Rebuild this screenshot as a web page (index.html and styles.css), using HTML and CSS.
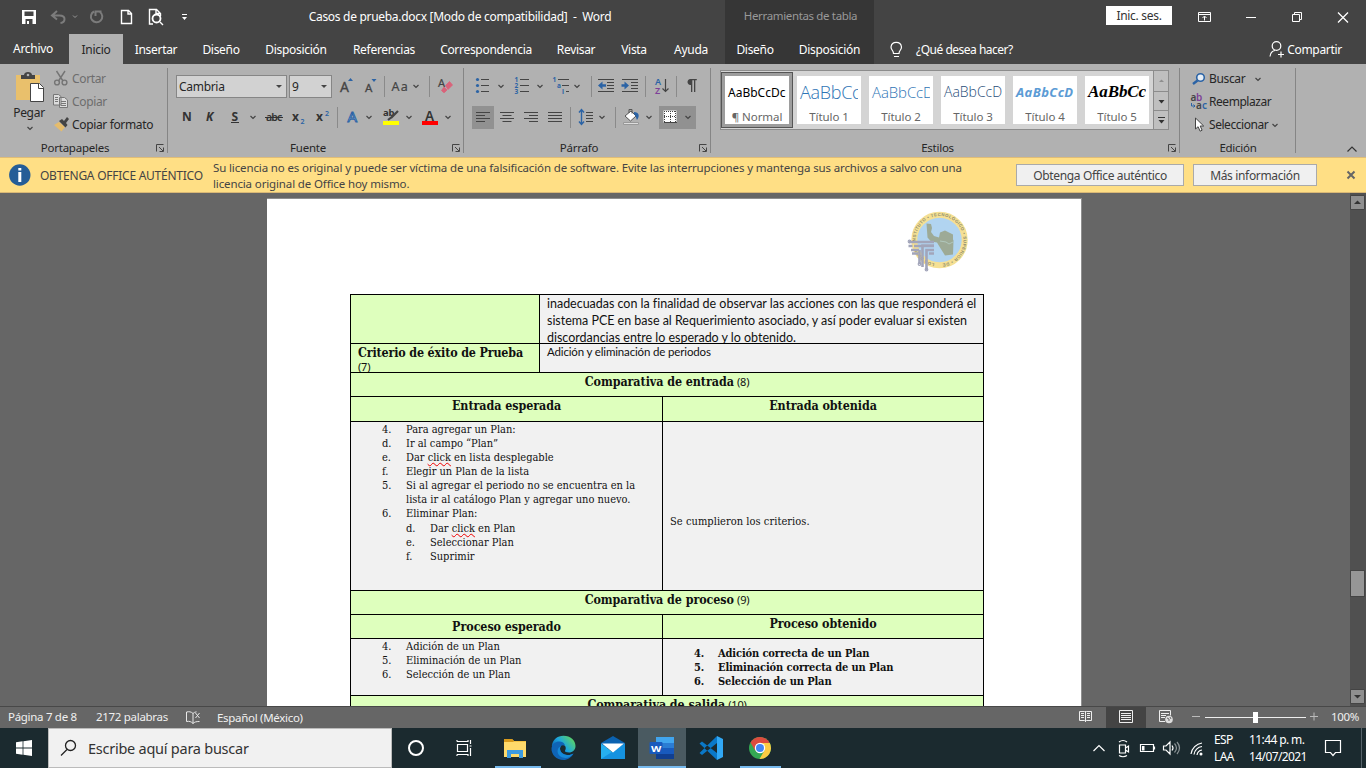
FILE: index.html
```html
<!DOCTYPE html>
<html lang="es">
<head>
<meta charset="utf-8">
<title>Casos de prueba.docx - Word</title>
<link rel="stylesheet" href="styles.css">
</head>
<body>
<svg class="defs" width="0" height="0"><defs>
<path id="cv" d="M-2.5-1 0 1.5 2.5-1" fill="none" stroke="#444" stroke-width="1.2"/>
<path id="launch" d="M.5 7.5V.5h7M3 3l4 4M7.5 3.5v4h-4" fill="none" stroke="#444"/>
</defs></svg>
<header class="titlebar">
  <div class="qat">
    <svg viewBox="0 4 199 25" width="199" height="25" fill="none" stroke="#fff">
      <path d="M22 10h14v14H22z" fill="#fff" stroke="none"/><path d="M24.500 11.500h9v4.500h-9zM25.500 19h7v5h-7z" fill="#444" stroke="none"/><path d="M27 21h2v3h-2z" fill="#fff" stroke="none"/>
      <g stroke="#7c7c7c" stroke-width="2"><path d="M57 11l-5 4.500 5 4M52.500 15.500h7c7 0 6 7 1 7.500"/><path d="M94 11.500a5.700 5.700 0 1 0 6 .5M95.500 16v-4.500h6"/></g>
      <path d="M73 15.500l2 2 2-2" stroke="#999"/>
      <path d="M121.500 10.500h7l3 3v10h-10zM128 10.500v3.500h3" stroke-width="1.400"/>
      <path d="M153 24h-3.500V9.500h7l4 4V16M156 9.500v4h4M160 22l3 3" stroke-width="1.400"/><circle cx="156.500" cy="18.500" r="4" stroke-width="1.800"/>
      <path d="M182 14.500h5"/><path d="M182 17h5l-2.500 3z" fill="#fff" stroke="none"/>
    </svg>
  </div>
  <div class="doc-title">Casos de prueba.docx [Modo de compatibilidad]&nbsp; -&nbsp; Word</div>
  <div class="ctx-title">Herramientas de tabla</div>
  <div class="window-tools">
    <button class="signin">Inic. ses.</button>
    <svg viewBox="1182 2 184 26" width="184" height="26" fill="none" stroke="#fff">
      <path d="M1198.500 10.500h12v9h-12zM1198.500 12.500h12M1204.500 18.500v-4M1202.500 16l2-2 2 2M1246 15.500h10M1292.500 12.500h7v7h-7zM1294.500 12v-1.500h7v7h-2"/><path d="M1338 10.500l10 10M1348 10.500l-10 10" stroke-width="1.300"/>
    </svg>
  </div>
</header>
<nav class="tabs">
  <span class="file">Archivo</span><span class="active">Inicio</span><span>Insertar</span><span>Diseño</span><span>Disposición</span><span>Referencias</span><span>Correspondencia</span><span>Revisar</span><span>Vista</span><span>Ayuda</span><i></i><span class="ctx">Diseño</span><span class="ctx">Disposición</span>
  <div class="tell">
    <svg viewBox="888 39 16 20" width="16" height="20" fill="none" stroke="#fff"><path d="M893.500 52.500c0-3-2.500-3.500-2.500-6.500a5.300 5.300 0 0 1 10.500 0c0 3-2.500 3.500-2.500 6.500zM894 55.500h5" stroke-width="1.200"/></svg>
    <span>¿Qué desea hacer?</span>
  </div>
  <div class="share">
    <svg viewBox="1267 39 17 20" width="17" height="20" fill="none" stroke="#fff" stroke-width="1.200"><circle cx="1276.500" cy="45" r="4.300"/><path d="M1270 55.500c.5-4 2-5.500 5-6M1278 53.500h6M1281 50.500v6"/></svg>
    <span>Compartir</span>
  </div>
</nav>
<section class="ribbon">
  <div class="group g-clip">
    <div class="body clip-body">
      <div class="paste">
        <svg viewBox="16 70 30 34" width="30" height="34"><path d="M17 75h24v25H17z" fill="#e9c06c"/><path d="M22 78v-3h3c0-4 8-4 8 0h3v4H22z" fill="#444"/><circle cx="29" cy="75" r="1.300" fill="#b1b1b1"/><path d="M31.500 83.500h9l4 4v14h-13z" fill="#fff" stroke="#444"/><path d="M39.500 84v4.500h5" fill="none" stroke="#444"/></svg>
        <span>Pegar</span>
        <svg width="10" height="8"><use href="#cv" x="5" y="4"/></svg>
      </div>
      <div class="cmds">
        <div class="cmd off"><svg viewBox="53 70 17 17" width="17" height="17" fill="none" stroke="#747474" stroke-width="1.400"><path d="M56.500 71l6.500 10M65 71l-6.500 10"/><circle cx="57" cy="82.500" r="2.400"/><circle cx="64.500" cy="82.500" r="2.400"/></svg><span>Cortar</span></div>
        <div class="cmd off"><svg viewBox="53 93 17 17" width="17" height="17" fill="#ddd" stroke="#777"><path d="M53.500 94.500h5l2.500 2v8.500h-7.500zM59.500 97.500h5l3 2.500v7.500h-8z"/><path d="M55 97.500h3M55 99.500h3M55 101.500h3M61 101.500h5M61 103.500h5M61 105.500h5"/></svg><span>Copiar</span></div>
        <div class="cmd"><svg viewBox="53 116 17 17" width="17" height="17"><path d="M54 125l5-3 6 5-3.500 4.500z" fill="#e5bc6c"/><path d="M59 121l3-2 2 2 3-4 2 2-3 4 1.500 2-2 2.500z" fill="#444"/></svg><span>Copiar formato</span></div>
      </div>
    </div>
    <div class="foot"><span>Portapapeles</span><svg width="8" height="8"><use href="#launch"/></svg></div>
  </div>
  <div class="group g-font">
    <div class="body">
      <div class="line one">
        <div class="combo name"><span>Cambria</span><b></b></div><div class="combo size"><span>9</span><b></b></div>
        <svg viewBox="334 74 122 24" width="122" height="24" font-family="Noto Sans" fill="#444"><text x="340" y="92" font-size="14" stroke="#444" stroke-width=".3">A</text><path d="M348 81h5l-2.500-3zM371.500 79h5l-2.500 3z" fill="#2b63a5"/><text x="365" y="92" font-size="11.500" stroke="#444" stroke-width=".3">A</text><path d="M384.500 76v21M429.500 76v21" stroke="#8a8a8a"/><text x="391.500" y="91" font-size="12.500" textLength="16" stroke="#444" stroke-width=".2">Aa</text><use href="#cv" x="416" y="86"/><text x="438" y="87" font-size="11" stroke="#444" stroke-width=".2">A</text><path d="M445.500 85.500l4-4 3 3.500-4.500 4.500zM444 87l3 3-2.500 2.500h-1l-2-2z" fill="#d9637a" stroke="#d9637a" stroke-width=".8"/></svg>
      </div>
      <div class="line two">
        <svg viewBox="176 105 280 24" width="280" height="24" font-family="Noto Sans" fill="#333">
          <g font-size="12" font-weight="700"><text x="182" y="121">N</text><text x="206" y="121" font-style="italic">K</text><text x="231.500" y="121">S</text><text x="292" y="121">x</text><text x="316" y="121">x</text></g><path d="M231 122.500h8" stroke="#333"/>
          <text x="266" y="121" font-size="10.500" font-weight="600" textLength="16">abc</text><path d="M265 117.500h18" stroke="#333"/>
          <text x="300.500" y="124" font-size="7" font-weight="600" fill="#2b63a5">2</text><text x="325" y="116" font-size="7" font-weight="600" fill="#2b63a5">2</text>
          <use href="#cv" x="253" y="117"/><use href="#cv" x="369" y="117"/><use href="#cv" x="409" y="117"/><use href="#cv" x="448" y="117"/>
          <path d="M337.500 107v21" stroke="#8a8a8a"/>
          <text x="347.500" y="122" font-size="15" fill="#b9d1ea" stroke="#2b63a5" stroke-width="1">A</text>
          <text x="383" y="116" font-size="9.500" font-weight="700">ab</text><path d="M398 111l-7 7M393 116l-5 4" stroke="#444" stroke-width="2.200"/><path d="M383 121h16v4h-16z" fill="#ff0"/>
          <text x="425" y="121" font-size="13.500" font-weight="600">A</text><path d="M422 121h16v4h-16z" fill="#f00"/>
        </svg>
      </div>
    </div>
    <div class="foot"><span>Fuente</span><svg width="8" height="8"><use href="#launch"/></svg></div>
  </div>
  <div class="group g-para">
    <div class="body">
      <div class="line one">
        <svg viewBox="472 74 230 24" width="230" height="24" fill="none" stroke="#444" stroke-width="1.200" font-family="Noto Sans">
          <path d="M481 79.500h8M481 85.500h8M481 91.500h8M520 79.500h9M520 85.500h9M520 91.500h9M558 79.500h11M562 85.500h7M566 91.500h3"/>
          <g fill="#2b63a5" stroke="none"><circle cx="477.500" cy="79.500" r="1.600"/><circle cx="477.500" cy="85.500" r="1.600"/><circle cx="477.500" cy="91.500" r="1.600"/><g font-size="6.500" font-weight="700"><text x="514.500" y="82">1</text><text x="514.500" y="88">2</text><text x="514.500" y="94">3</text><text x="552.500" y="82">1</text><text x="557" y="88">a</text><text x="562" y="94">i</text></g><path d="M598 85.500l4.500-4v2.800h3.500v2.400h-3.500v2.800zM629 85.500l-4.500-4v2.800h-3v2.400h3v2.800z"/></g>
          <use href="#cv" x="501" y="86"/><use href="#cv" x="540" y="86"/><use href="#cv" x="577" y="86"/>
          <path d="M591.500 76v21M645.500 76v21M676.500 76v21" stroke="#8a8a8a" stroke-width="1"/>
          <path d="M598 79.500h16M607 82.500h7M607 85.500h7M607 88.500h7M598 91.500h16M622 79.500h16M631 82.500h7M631 85.500h7M631 88.500h7M622 91.500h16M665.500 79v12M662.500 88.500l3 3 3-3"/>
          <g stroke="none"><text x="655" y="85" font-size="9" font-weight="600" fill="#2b63a5">A</text><text x="655" y="94" font-size="9" font-weight="600" fill="#7d3f98">Z</text><path d="M696 79h-5.500c-4 0-4 6 0 6H691v7h1.300V80.300H694V92h1.300V80.300h1.500V79z" fill="#444"/></g>
        </svg>
      </div>
      <div class="line two">
        <svg viewBox="472 105 230 24" width="230" height="24" fill="none" stroke="#444">
          <path d="M472 106h22v23h-22zM659 106h37v23h-37z" fill="#919191" stroke="none"/>
          <path d="M476 112.500h14M476 115.500h9M476 118.500h14M476 121.500h9M500 112.500h14M502.500 115.500h9M500 118.500h14M502.500 121.500h9M524 112.500h14M529 115.500h9M524 118.500h14M529 121.500h9M548 112.500h14M548 115.500h14M548 118.500h14M548 121.500h14M586 112.500h7M586 115.500h7M586 118.500h7M586 121.500h7"/>
          <path d="M570.500 107v21M615.500 107v21" stroke="#8a8a8a"/>
          <path d="M581.500 110v14M579 112.500l2.500-3 2.500 3M579 121.500l2.500 3 2.500-3" stroke="#2b63a5" stroke-width="1.400"/>
          <path d="M625 116l6-5 5 5-5.500 5z" fill="#fff" stroke="#555"/><path d="M629 113v-3.500h3v4" stroke="#555"/><path d="M634 112c5 0 6 4 3 8-1-2-.5-3.500-3-6z" fill="#2b63a5" stroke="none"/><path d="M623.500 122.500h15v2h-15z" fill="#ddd" stroke="#999"/>
          <path d="M663.500 110.500h13v12h-13z" fill="#fff" stroke="none"/><path d="M664 111.500h12M664 116.500h12M670.500 111v11M664.500 111v11M675.500 111v11" stroke-dasharray="1 1"/><path d="M664 122.500h13"/>
          <use href="#cv" x="602" y="117"/><use href="#cv" x="649" y="117"/><use href="#cv" x="688" y="117"/>
        </svg>
      </div>
    </div>
    <div class="foot"><span>Párrafo</span><svg width="8" height="8"><use href="#launch"/></svg></div>
  </div>
  <div class="group g-styles">
    <div class="body gallery-wrap">
      <div class="gallery">
        <div class="style sel"><div class="s0">AaBbCcDc</div><span>¶ Normal</span></div>
        <div class="style"><div class="s1">AaBbCc</div><span>Título 1</span></div>
        <div class="style"><div class="s2">AaBbCcD</div><span>Título 2</span></div>
        <div class="style"><div class="s3">AaBbCcD</div><span>Título 3</span></div>
        <div class="style"><div class="s4">AaBbCcD</div><span>Título 4</span></div>
        <div class="style"><div class="s5">AaBbCc</div><span>Título 5</span></div>
        <div class="gscroll">
          <svg width="14" height="20"><path d="M5 11h5l-2.500-2.500z" fill="#8e8e8e"/></svg>
          <svg width="14" height="19"><path d="M4.500 8h6l-3 3.500z" fill="#333"/></svg>
          <svg width="14" height="18"><path d="M4 6.500h7" stroke="#333"/><path d="M4.500 9h6l-3 3.500z" fill="#333"/></svg>
        </div>
      </div>
    </div>
    <div class="foot"><span>Estilos</span><svg width="8" height="8"><use href="#launch"/></svg></div>
  </div>
  <div class="group g-edit">
    <div class="body cmds">
      <div class="cmd"><svg viewBox="1190 69 19 18" width="19" height="18" fill="none"><circle cx="1200.500" cy="76.500" r="3.800" fill="#e6eef6" stroke="#2b63a5" stroke-width="1.600"/><path d="M1197.500 79.500l-4.500 3.500" stroke="#2b63a5" stroke-width="2.400"/></svg><span>Buscar</span><svg class="far" width="8" height="8"><use href="#cv" x="4" y="4"/></svg></div>
      <div class="cmd"><svg viewBox="1190 92 19 18" width="19" height="18" font-family="Noto Sans" font-size="10" font-weight="600"><text x="1190.500" y="100" fill="#444">a</text><text x="1196" y="100" fill="#7d3f98">b</text><text x="1196" y="107.500" fill="#444">a</text><text x="1202" y="107.500" fill="#2b63a5">c</text><path d="M1191.500 102v3h3.500M1193.500 103.500l1.500 1.500-1.500 1.500" fill="none" stroke="#2b63a5"/></svg><span class="tight">Reemplazar</span></div>
      <div class="cmd"><svg viewBox="1190 115 19 18" width="19" height="18"><path d="M1195.500 117v11l2.600-2.300 2 4.500 2-1-1.900-4.200h3.500z" fill="#fff" stroke="#444"/></svg><span class="tight">Seleccionar</span><svg class="near" width="8" height="8"><use href="#cv" x="4" y="4"/></svg></div>
    </div>
    <div class="foot"><span>Edición</span></div>
  </div>
  <div class="collapse"><svg width="12" height="8" fill="none" stroke="#333" stroke-width="1.200"><path d="M1.500 6.500l4.500-4.500 4.500 4.500"/></svg></div>
</section>
<section class="notice">
  <svg viewBox="8 164 24 24" width="24" height="24"><circle cx="19.800" cy="176" r="10.700" fill="#255d97"/><path d="M18.300 173h3v10h-3zM18.300 169h3v2.500h-3z" fill="#fff"/></svg>
  <span class="n-head">OBTENGA OFFICE AUTÉNTICO</span>
  <p>Su licencia no es original y puede ser víctima de una falsificación de software. Evite las interrupciones y mantenga sus archivos a salvo con una<br>licencia original de Office hoy mismo.</p>
  <button class="b1">Obtenga Office auténtico</button><button class="b2">Más información</button>
  <svg class="n-x" width="10" height="10"><path d="M1.500 1.500l7 7M8.500 1.500l-7 7" stroke="#666" stroke-width="2"/></svg>
</section>
<main class="workspace">
  <div class="page">
    <div class="letterhead">
      <svg viewBox="905 209 66 64" width="66" height="64">
        <circle cx="939.500" cy="240" r="25.200" fill="#b1d4f0" stroke="#f5e094" stroke-width="6"/>
        <path d="M926.500 223.500l4.500.5 1 4-1 4 3 4 5 1.500 1-5 5-2 8 4v5l.5 1-.5 14-8 1-5-8-3-5-6-1-3.500-4z" fill="#9daa96"/><path d="M940 241l6 1 3 2 4-2" stroke="#b1c8bd" fill="none"/>
        <path id="ring" d="M939.500 264a24 24 0 1 1 .1 0" fill="none"/>
        <text font-family="Liberation Sans" font-size="4.300" font-weight="700" fill="#8e8d6e"><textPath href="#ring" startOffset="5" textLength="142">LOS RÍOS • INSTITUTO • TECNOLÓGICO • SUPERIOR • DE</textPath></text>
        <g fill="none" stroke="#a2a5ba" stroke-width="2.600"><path d="M909 242h25M908.500 246h4M914 246h20M911 250h8M934 250h-7.500v20M912 253.500h6M934 245.500h-11.500V267M934 253.500h-5M919.500 250v14"/><circle cx="909.500" cy="241.500" r=".6"/><circle cx="919.500" cy="264" r=".6"/><circle cx="926.500" cy="269.500" r=".6"/></g>
      </svg>
    </div>
    <div class="grid">
      <div class="row r1"><div class="cell green k"></div><div class="cell sans"><p>inadecuadas con la finalidad de observar las acciones con las que responderá el</p><p class="p2">sistema PCE en base al Requerimiento asociado, y así poder evaluar si existen</p><p class="p3">discordancias entre lo esperado y lo obtenido.</p></div></div>
      <div class="row r2"><div class="cell green k key"><b>Criterio de éxito de Prueba</b><small>(7)</small></div><div class="cell sans"><p class="short">Adición y eliminación de periodos</p></div></div>
      <div class="row r3"><div class="cell green full h"><b>Comparativa de entrada</b> <small>(8)</small></div></div>
      <div class="row r4"><div class="cell green l h"><b>Entrada esperada</b></div><div class="cell green r h"><b>Entrada obtenida</b></div></div>
      <div class="row r5">
        <div class="cell l list">
          <div><i>4.</i>Para agregar un Plan:</div><div><i>d.</i>Ir al campo “Plan”</div><div><i>e.</i>Dar <u>click</u> en lista desplegable</div><div><i>f.</i>Elegir un Plan de la lista</div><div><i>5.</i>Si al agregar el periodo no se encuentra en la</div><div><i></i>lista ir al catálogo Plan y agregar uno nuevo.</div><div><i>6.</i>Eliminar Plan:</div>
          <div class="sub first"><i>d.</i>Dar <u>click</u> en Plan</div><div class="sub"><i>e.</i>Seleccionar Plan</div><div class="sub"><i>f.</i>Suprimir</div>
        </div>
        <div class="cell r met">Se cumplieron los criterios.</div>
      </div>
      <div class="row r6"><div class="cell green full h"><b>Comparativa de proceso</b> <small>(9)</small></div></div>
      <div class="row r7"><div class="cell green l h low"><b>Proceso esperado</b></div><div class="cell green r h"><b>Proceso obtenido</b></div></div>
      <div class="row r8">
        <div class="cell l list"><div><i>4.</i>Adición de un Plan</div><div><i>5.</i>Eliminación de un Plan</div><div><i>6.</i>Selección de un Plan</div></div>
        <div class="cell r list strong"><div><i>4.</i>Adición correcta de un Plan</div><div><i>5.</i>Eliminación correcta de un Plan</div><div><i>6.</i>Selección de un Plan</div></div>
      </div>
      <div class="row r9"><div class="cell green full h"><b>Comparativa de salida</b> <small>(10)</small></div></div>
    </div>
  </div>
  <div class="scroll">
    <svg width="15" height="15"><path d="M.5.500h14v14H.5z" fill="#8f8f8f" stroke="#444"/><path d="M4 9h7L7.500 5.500z" fill="#333"/></svg>
    <div class="thumb"></div>
    <svg width="15" height="15"><path d="M.5.500h14v14H.5z" fill="#8f8f8f" stroke="#444"/><path d="M4 6h7l-3.500 3.500z" fill="#333"/></svg>
  </div>
</main>
<div class="status">
  <span class="st1">Página 7 de 8</span><span class="st2">2172 palabras</span>
  <svg viewBox="184 708 18 18" width="18" height="18" fill="none" stroke="#e8e8e8"><path d="M193 712.500c-2-2-4-2-6.500-1.500v9.500c3-.5 4.500 0 6.500 2v-10c1-1 2-1.500 3.500-1.700M193 722.500c1.500-1.500 3-2 6.500-2M195.500 712l4 5M199.500 712l-4 5"/></svg>
  <span class="st3">Español (México)</span>
  <svg class="views" viewBox="1070 707 252 21" width="252" height="21" fill="none" stroke="#eee">
    <path d="M1106 707h40v21h-40z" fill="#444" stroke="none"/>
    <path d="M1085.500 711v11M1079.500 711.500h5l1 1 1-1h5v9h-5l-1 1-1-1h-5zM1081 713.500h3M1081 715.500h3M1081 717.500h3M1087 713.500h3M1087 715.500h3M1087 717.500h3"/>
    <path d="M1119.500 710.500h13v12h-13zM1121 713.500h10M1121 715.500h10M1121 717.500h10M1121 719.500h10"/>
    <path d="M1165 721.500h-5.500v-11h11v5M1161 713.500h8M1161 715.500h5M1161 717.500h4"/><circle cx="1169" cy="719.500" r="3.800" fill="#ddd" stroke="none"/><path d="M1167 718l2 1v2M1170 717l1 2" stroke="#666"/>
    <path d="M1192 716.500h8M1310 716.500h8M1314 712.500v8" stroke="#bbb"/><path d="M1205 717.500h101"/><path d="M1253 712h5v11h-5z" fill="#fff" stroke="none"/>
  </svg>
  <span class="st4">100%</span>
</div>
<footer class="taskbar">
  <div class="start"><svg viewBox="16 740 16 16" width="16" height="16" fill="#fff"><path d="M16 742.200l6.600-.9v6.300H16zM23.400 741.200l8.600-1.200v7.600h-8.600zM16 748.400h6.600v6.300l-6.600-.9zM23.400 748.400H32v7.600l-8.600-1.200z"/></svg></div>
  <div class="search"><svg viewBox="60 739 17 18" width="17" height="18" fill="none" stroke="#222" stroke-width="1.300"><circle cx="70.500" cy="745.500" r="5"/><path d="M67 749.500l-6 6"/></svg><span>Escribe aquí para buscar</span></div>
  <svg viewBox="392 728 394 40" width="394" height="40">
    <defs><linearGradient id="eg" x1="0" y1=".8" x2="1" y2=".2"><stop offset="0" stop-color="#0a59a8"/><stop offset=".45" stop-color="#1ba4e0"/><stop offset="1" stop-color="#62d957"/></linearGradient></defs>
    <path d="M638 728h48v40h-48z" fill="#4a5a61"/><path d="M495 766h46v2h-46zM638 766h48v2h-48zM740 766h41v2h-41z" fill="#76b9ed"/>
    <circle cx="416" cy="748" r="7" fill="none" stroke="#fff" stroke-width="2"/>
    <path d="M457.500 744.500h10v7h-10zM457 741.500v-1.500M457 741.500h11V740M457 754.500h11v1.500M457 754.500v1.500M470.500 740v4M470.500 748v8M469.500 746h2" fill="none" stroke="#fff" stroke-width="1.200"/>
    <path d="M504 739h8l2 2h12v16h-22z" fill="#f5c344"/><path d="M504 739h8l2 2-2 2h-8z" fill="#d99b1d"/><path d="M504 742h22v15h-22z" fill="#ffda6b"/><path d="M507 758v-8h16v8h-4v-4h-8v4z" fill="#3d9be0"/>
    <path d="M551.800 746c.7-6.300 5.500-10.200 11.700-10.200 7 0 12 4.700 12 10.200 0 4-3 6.500-6.500 6.500-3 0-4.500-1-4-2 1.500-2 1-6-3.500-6-4 0-6 3-9.700 1.500z" fill="url(#eg)"/><path d="M551.500 748c1-5 5-7 8.500-6.500 3 .3 5 2.500 5 4.500-1-1-3-1-4 0-2.500 3 0 8.500 6 9 3 .2 5-.7 6.500-1.500-2 4-6 6.500-10 6.500-7 0-12.500-5.500-12-12z" fill="#0f64b6"/><path d="M561 746c-2.500 3 0 8.500 6 9 3 .2 5-.7 6.500-1.500-4 5-9 5.500-13 3-4-3-4-8.500.5-10.500z" fill="#1489d8"/>
    <path d="M601 743l12-7 12 7v5h-24z" fill="#0b62b0"/><path d="M601 743.500l12 9 12-9V759h-24z" fill="#26b0f0"/><path d="M601 759l24-15.500V759z" fill="#1592e0"/><path d="M602 743.500h22l-11 9z" fill="#fff"/>
    <path d="M656 737h18v22h-18z" fill="#2b7cd3"/><path d="M656 737h18v6h-18z" fill="#41a5ee"/><path d="M656 748h18v6h-18z" fill="#185abd"/><path d="M656 754h18v5h-18z" fill="#103f91"/><rect x="649.500" y="742" width="13" height="12" rx="1" fill="#185abd"/><text x="651" y="752" font-family="Noto Sans" font-weight="700" font-size="9.500" textLength="10" lengthAdjust="spacingAndGlyphs" fill="#fff">W</text>
    <path d="M699.500 743.500l2.500-2 15 11.500v7zM699.500 753l2.500 2 15-12v-7z" fill="#0a78c8"/><path d="M717 736l6 3v18l-6 3z" fill="#31a8f5"/>
    <circle cx="760" cy="748" r="11" fill="#34a853"/><path d="M760 748L750.500 742.500A11 11 0 0 1 769.500 742.500z" fill="#dd4b3e"/><path d="M750.500 742.500l4.800 8.200 4.700-7.700z" fill="#dd4b3e"/><path d="M760 743h9.800a11 11 0 0 1-10.300 16l5-8.500z" fill="#fbcb43"/><circle cx="760" cy="748" r="5.200" fill="#fff"/><circle cx="760" cy="748" r="4" fill="#4285f4"/>
  </svg>
  <div class="tray">
    <svg viewBox="1090 736 120 24" width="120" height="24" fill="none" stroke="#fff" stroke-width="1.200"><path d="M1093.500 751l5.500-5.500 5.500 5.500M1119.500 745h6v8h-6zM1125.500 748l3-2v6l-3-2M1119 742q4-3 8 0M1119 755.500q4 2.500 8 0M1140.500 744.500h13v7h-13zM1154.500 746.500v3"/><path d="M1142 746h2.500v4.500h-2.500z" fill="#fff" stroke="none"/><path d="M1163.500 746v4h2.500l4 4v-12l-4 4zM1172 745.500q2 2.500 0 5"/><path d="M1174.500 743.500q4 4.500 0 9M1177 742q5 6 0 12" stroke="#8b9396"/><path d="M1191 754a13 13 0 0 1 11-11M1194 754.500a9 9 0 0 1 8-8M1197 755a6 6 0 0 1 5-5" /><circle cx="1201" cy="754" r="1.500" fill="#fff" stroke="none"/></svg>
    <div class="clock lang"><span>ESP</span><span>LAA</span></div>
    <div class="clock"><span>11:44 p. m.</span><span>14/07/2021</span></div>
    <svg viewBox="1320 736 46 24" width="46" height="24" fill="none" stroke="#fff" stroke-width="1.200"><path d="M1325.500 740.500h15v12h-5l-2.500 3-2.500-3h-5z"/><path d="M1361.500 728v40" stroke="#56636a" stroke-width="1"/></svg>
  </div>
</footer>
</body>
</html>
```
FILE: styles.css
```css
* { box-sizing: border-box; }
body { margin: 0; width: 1366px; height: 768px; overflow: hidden; display: flex; flex-direction: column; font: 12px "Noto Sans", sans-serif; letter-spacing: -.3px; color: #262626; white-space: nowrap; background: #666; }
svg { display: block; flex: none; overflow: visible; }
.defs { position: absolute; }
button { font: inherit; letter-spacing: inherit; color: #333; padding: 0; border: 0; }
p { margin: 0; }

.titlebar { height: 33px; flex: none; display: flex; align-items: center; background: #444; color: #fff; }
.qat { width: 199px; }
.doc-title { width: 526px; padding-right: 4px; text-align: center; }
.ctx-title { width: 149px; height: 33px; line-height: 32px; text-align: center; background: #363636; color: #999; letter-spacing: -.35px; font-size: 11.5px; padding-left: 2px; }
.window-tools { flex: 1; display: flex; justify-content: flex-end; align-items: center; gap: 10px; }
.signin { width: 66px; height: 19px; background: #fff; line-height: 19px; margin-bottom: 2px; letter-spacing: -.3px; }

.tabs { height: 31px; flex: none; display: grid; grid-template-columns: 69px 54px 66px 64px 86px 90px 114px 66px 50px 64px 2px 60px 89px 1fr auto; background: #444; color: #fff; line-height: 33px; text-align: center; }
.tabs .file { padding-right: 3px; line-height: 32px; }
.tabs .active { background: #b1b1b1; color: #262626; height: 31px; margin-top: 1px; line-height: 32px; }
.tabs .ctx { background: #363636; }
.tell { display: flex; align-items: center; padding-left: 14px; gap: 12px; line-height: 31px; letter-spacing: -.5px; }
.share { display: flex; align-items: center; padding-right: 24px; gap: 3px; line-height: 31px; }

.ribbon { height: 93px; flex: none; display: flex; background: #b1b1b1; padding-top: 4px; }
.group { height: 85px; display: flex; flex-direction: column; border-right: 1px solid #858585; }
.g-clip { width: 168px; }
.g-font { width: 296px; }
.g-para { width: 247px; }
.g-styles { width: 469px; }
.g-edit { width: 116px; }
.body { height: 71px; flex: none; }
.foot { height: 17px; flex: none; line-height: 17px; display: flex; align-items: center; padding-right: 3px; letter-spacing: -.25px; font-size: 11.5px; }
.foot span { flex: 1; text-align: center; }
.g-clip .foot span { padding-right: 6px; }
.g-font .foot span { padding-right: 4px; }
.g-para .foot span { padding-right: 5px; }
.g-styles .foot span { padding-right: 4px; }
.g-edit .foot span { padding-left: 4px; }
.clip-body { display: flex; }
.paste { width: 53px; display: flex; flex-direction: column; align-items: center; padding: 2px 0 0 7px; }
.paste span { line-height: 18px; padding-right: 2px; }
.paste svg:last-child { margin-top: 2px; }
.cmd { height: 23px; display: flex; align-items: center; }
.cmd span { margin-left: 2px; line-height: 22px; letter-spacing: -.35px; }
.cmds .cmd:first-child { margin-top: -1px; }
.off { color: #6d6d6d; }
.body.cmds { padding-left: 10px; }
.g-edit .cmd span { margin-left: 0; letter-spacing: -.35px; }
.g-edit .cmd .tight { letter-spacing: -.45px; }
.far { margin-left: 9px; }
.near { margin-left: 3px; }
.line { display: flex; padding-left: 8px; }
.line.one { padding-top: 6px; height: 37px; }
.combo { height: 23px; margin-top: 1px; border: 1px solid #868686; background: #d2d2d2; line-height: 21px; padding: 0 4px 0 2px; display: flex; justify-content: space-between; align-items: center; letter-spacing: -.3px; }
.combo b { border: 3px solid transparent; border-top-color: #444; border-bottom: 0; }
.name { width: 111px; margin-right: 2px; }
.size { width: 43px; margin-right: 2px; }
.gallery-wrap { padding: 2px 0 0 9px; }
.gallery { display: flex; width: 449px; height: 60px; border: 1px solid #8c8c8c; background: #d4d4d4; }
.style { width: 72px; height: 56px; margin-top: 1px; padding: 4px; flex: none; text-align: center; }
.style div { height: 32px; line-height: 34px; background: #fff; text-align: left; overflow: hidden; padding-left: 3px; border-right: 3px solid #fff; }
.style span { display: block; height: 16px; line-height: 17px; background: #fff; color: #666; letter-spacing: -.05px; font-size: 11.5px; }
.sel { background: #9d9d9d; border: 1px solid #555; padding: 3px; }
.style .s0 { color: #000; font-size: 12px; letter-spacing: 0; }
.style .s1 { color: #2e74b5; font: 300 18px/33px "Open Sans"; }
.style .s2 { color: #2e74b5; font: 300 15px/32px "Open Sans"; letter-spacing: -.1px; }
.style .s3 { color: #1f4d78; font: 300 14px/32px "Open Sans"; letter-spacing: 0; }
.style .s4 { color: #5b9bd5; font: italic 700 13px/33px "Open Sans"; letter-spacing: .4px; }
.style .s5 { color: #000; font: italic 700 17px/31px "Liberation Serif"; letter-spacing: -.1px; }
.gscroll { width: 15px; border-left: 1px solid #8c8c8c; background: #bfbfbf; margin-left: auto; }
.gscroll svg + svg { border-top: 1px solid #8c8c8c; }
.collapse { flex: 1; display: flex; justify-content: flex-end; align-items: flex-end; padding: 0 8px 4px 0; }

.notice { height: 36px; flex: none; display: flex; align-items: center; background: #ffdf85; border-top: 1px solid #e0bd77; border-bottom: 1px solid #d9b876; color: #444; padding-left: 8px; }
.n-head { width: 173px; padding-left: 8px; letter-spacing: -.25px; }
.notice p { width: 811px; padding: 2px 0 0 8px; line-height: 16px; font-size: 11.5px; letter-spacing: -.13px; }
.notice button { height: 22px; background: #f0f0f0; border: 1px solid #aaa; color: #444; letter-spacing: -.35px; }
.b1 { width: 168px; margin-right: 9px; }
.b2 { width: 124px; }
.n-x { margin-left: 29px; }

.workspace { height: 513px; flex: none; display: flex; justify-content: space-between; overflow: hidden; padding-left: 267px; background: #666; }
.page { width: 815px; height: 520px; margin-top: 5px; background: #fff; border-top: 1px solid #8f8f8f; border-right: 1px solid #8f8f8f; flex: none; }
.letterhead { height: 95px; padding: 10px 0 0 638px; }
.grid { width: 634px; margin-left: 83px; border-top: 1px solid #000; border-left: 1px solid #000; color: #111; }
.row { display: flex; }
.cell { border-right: 1px solid #000; border-bottom: 1px solid #000; background: #f1f1f1; height: 100%; overflow: hidden; font-family: "DejaVu Serif Condensed", "DejaVu Serif", serif; font-stretch: condensed; font-size: 11px; letter-spacing: -.02px; flex: none; }
.cell.green { background: #deffbd; }
.k { width: 189px; }
.cell.sans { width: 444px; padding-left: 7px; font: 12.5px/16px Lato, sans-serif; letter-spacing: -.02px; }
.sans p { line-height: 17px; }
.sans .short { font-size: 11.5px; letter-spacing: -.15px; line-height: 16px; }
.l { width: 312px; }
.r { width: 321px; }
.full { width: 633px; }
.r1 { height: 49px; }
.r2 { height: 29px; }
.r3 { height: 24px; }
.r4 { height: 25px; }
.r5 { height: 169px; }
.r6, .r7 { height: 24px; }
.r8 { height: 57px; }
.r9 { height: 30px; }
.h { text-align: center; line-height: 18px; }
.h.low { line-height: 24px; }
.cell > b { font-size: 12.4px; letter-spacing: -.06px; }
small { font: 11px "Noto Sans"; letter-spacing: -.2px; }
.key { padding: 0 0 0 7px; }
.cell.key > b { display: block; line-height: 17px; letter-spacing: -.15px; }
.key small { display: block; line-height: 11px; }
.list { padding: 1px 0 0 31px; line-height: 14px; }
.list div { height: 14px; }
.list i { display: inline-block; width: 24px; font-style: normal; }
.list .sub { padding-left: 24px; }
.list .first { margin-top: 1px; }
.list u { text-decoration: underline wavy #e00 1px; text-underline-offset: 1px; text-decoration-skip-ink: none; }
.met { display: flex; align-items: center; padding: 31px 0 0 7px; }
.cell.met { letter-spacing: .04px; }
.cell.strong { font-weight: 700; padding-top: 8px; letter-spacing: -.12px; }
.scroll { width: 16px; background: #505050; padding: 2px 1px 2px 0; display: flex; flex-direction: column; }
.thumb { height: 27px; margin: 360px 0 auto; background: #969696; border: 1px solid #444; }

.status { height: 22px; flex: none; border-top: 1px solid #484848; background: #666; color: #f0f0f0; display: flex; align-items: center; padding-left: 8px; font-size: 11.5px; letter-spacing: -.3px; }
.st1 { width: 88px; margin-top: -2px; }
.st2 { width: 88px; margin-top: -2px; }
.st3 { margin-left: 15px; }
.views { margin-left: auto; }
.st4 { width: 44px; padding-left: 9px; margin-top: -2px; }

.taskbar { height: 40px; flex: none; display: flex; align-items: center; background: #1b2a2f; color: #fff; }
.start { width: 48px; padding-left: 16px; }
.search { width: 344px; height: 40px; background: #f1f1f1; border: 1px solid #bbb; color: #333; display: flex; align-items: center; padding-left: 11px; font-size: 14.5px; letter-spacing: -.25px; }
.search span { margin-left: 11px; }
.tray { flex: 1; display: flex; justify-content: flex-end; align-items: center; }
.clock { width: 71px; display: flex; flex-direction: column; line-height: 17px; letter-spacing: -.6px; }
.clock.lang { width: 35px; margin-left: 4px; }
```
